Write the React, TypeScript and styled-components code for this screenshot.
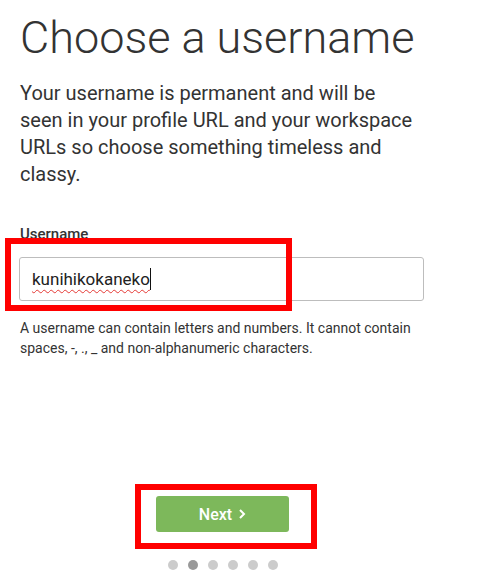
import styled, { createGlobalStyle } from "styled-components";

const GlobalStyle = createGlobalStyle`
  html, body {
    margin: 0;
    padding: 0;
    background: #ffffff;
  }
  body {
    font-family: Roboto, "Liberation Sans", Arial, sans-serif;
    color: #333333;
  }
`;

const Page = styled.div`
  box-sizing: border-box;
  height: 100vh;
  width: 425px;
  padding: 0 0 15px 20px;
  display: flex;
  flex-direction: column;
`;

const Title = styled.h1`
  margin: 11px 0 0;
  font-size: 45px;
  font-weight: 300;
  line-height: 1.2;
  color: #333;
  white-space: nowrap;
`;

const Lead = styled.p`
  margin: 15px 0 0;
  width: 402px;
  font-size: 20px;
  line-height: 27px;
  color: #333;
`;

const Field = styled.div`
  margin-top: 36px;
  display: flex;
  flex-direction: column;
`;

const Label = styled.label`
  font-size: 15px;
  line-height: 20px;
  font-weight: 500;
  color: #333;
`;

const InputWrap = styled.div`
  position: relative;
  margin-top: 13px;
`;

const Input = styled.div`
  box-sizing: border-box;
  height: 44px;
  width: 405px;
  margin-left: -1px;
  border: 1px solid #bdbdbd;
  border-radius: 3px;
  padding: 0 12px;
  display: flex;
  align-items: center;
  font-size: 17px;
  color: #222;
`;

const Typed = styled.span`
  text-decoration: underline wavy #e53935;
  text-decoration-thickness: 1px;
  text-underline-offset: 4px;
`;

const Caret = styled.span`
  display: inline-block;
  width: 1px;
  height: 22px;
  background: #111;
`;

const Hint = styled.p`
  margin: 17px 0 0;
  font-size: 14px;
  line-height: 20px;
  color: #333;
`;

const Footer = styled.div`
  margin-top: auto;
  display: flex;
  flex-direction: column;
  align-items: center;
  gap: 28px;
`;

const ButtonWrap = styled.div`
  position: relative;
`;

const NextButton = styled.button`
  width: 133px;
  height: 36px;
  border: none;
  border-radius: 3px;
  background: #7db85b;
  color: #fff;
  font-family: Roboto, "Liberation Sans", Arial, sans-serif;
  font-size: 16px;
  font-weight: 500;
  display: flex;
  align-items: center;
  justify-content: center;
  gap: 6px;
  cursor: pointer;
`;

const Highlight = styled.div<{ $l: number; $t: number; $w: number; $h: number }>`
  position: absolute;
  box-sizing: border-box;
  left: ${(p) => p.$l}px;
  top: ${(p) => p.$t}px;
  width: ${(p) => p.$w}px;
  height: ${(p) => p.$h}px;
  border: 6px solid #ff0000;
  pointer-events: none;
`;

const Dots = styled.div`
  display: flex;
  gap: 10px;
`;

const Dot = styled.span<{ $active?: boolean }>`
  width: 10px;
  height: 10px;
  border-radius: 50%;
  background: ${(p) => (p.$active ? "#999999" : "#cccccc")};
`;

export default function App() {
  return (
    <>
      <GlobalStyle />
      <Page>
        <Title>Choose a username</Title>
        <Lead>
          Your username is permanent and will be seen in your profile URL and
          your workspace URLs so choose something timeless and classy.
        </Lead>
        <Field>
          <Label>Username</Label>
          <InputWrap>
            <Input>
              <Typed>kunihikokaneko</Typed>
              <Caret />
            </Input>
            <Highlight $l={-15} $t={-19} $w={287} $h={73} />
          </InputWrap>
          <Hint>
            A username can contain letters and numbers. It cannot contain
            spaces, -, ., _ and non-alphanumeric characters.
          </Hint>
        </Field>
        <Footer>
          <ButtonWrap>
            <NextButton type="button">
              Next
              <svg width="8" height="12" viewBox="0 0 8 12">
                <polyline
                  points="2,2 6,6 2,10"
                  fill="none"
                  stroke="#fff"
                  strokeWidth="2"
                />
              </svg>
            </NextButton>
            <Highlight $l={-21} $t={-12} $w={182} $h={65} />
          </ButtonWrap>
          <Dots>
            {[0, 1, 2, 3, 4, 5].map((i) => (
              <Dot key={i} $active={i === 1} />
            ))}
          </Dots>
        </Footer>
      </Page>
    </>
  );
}
